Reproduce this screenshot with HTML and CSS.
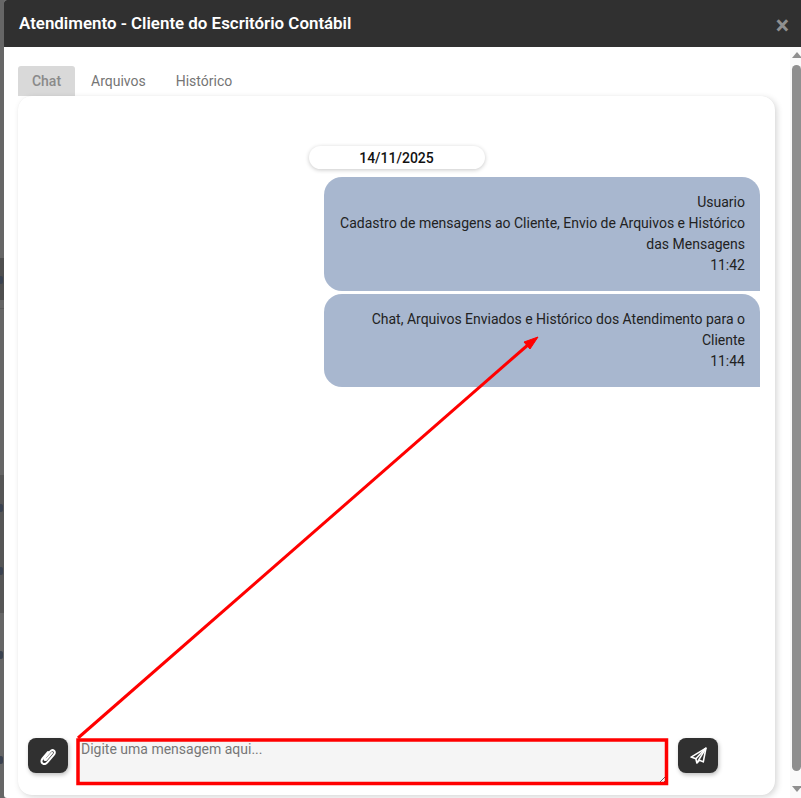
FILE: index.html
```html
<!DOCTYPE html>
<html lang="pt-BR">
<head>
<meta charset="utf-8">
<title>Atendimento</title>
<link rel="stylesheet" href="styles.css">
</head>
<body>
<div class="backdrop">
  <div class="band band-a"></div>
  <div class="band band-b"><i class="mark"></i></div>
  <div class="band band-c"></div>
  <div class="band band-d"></div>
  <div class="band band-e"><i class="mark"></i></div>
  <div class="band band-f"></div>
  <div class="band band-e"><i class="mark"></i></div>
  <div class="band band-g"></div>
  <div class="band band-g band-light"></div>
  <div class="band band-h"><i class="mark"></i></div>
  <div class="band band-i"></div>
  <div class="band band-h"><i class="mark"></i></div>
  <div class="band band-j"></div>
</div>
<main class="modal">
  <header class="modal-header">
    <h1 class="modal-title">Atendimento - Cliente do Escritório Contábil</h1>
    <span class="modal-close">×</span>
  </header>
  <div class="modal-body">
    <div class="content">
      <nav class="tabs">
        <span class="tab tab-active">Chat</span>
        <span class="tab">Arquivos</span>
        <span class="tab">Histórico</span>
      </nav>
      <section class="card">
        <div class="messages">
          <div class="date-row"><span class="date-pill">14/11/2025</span></div>
          <div class="bubble">Usuario<br>Cadastro de mensagens ao Cliente, Envio de Arquivos e Histórico das Mensagens<br>11:42</div>
          <div class="bubble">Chat, Arquivos Enviados e Histórico dos Atendimento para o Cliente<br>11:44</div>
        </div>
        <div class="composer">
          <button class="icon-btn" type="button" aria-label="Anexar">
            <svg width="18" height="18" viewBox="0 0 16 16" fill="none" stroke="#fff" stroke-width="1.8" stroke-linecap="round" stroke-linejoin="round"><path d="M5.2 9.6 10 3.9c1-1.1 2.5-1.300 3.400-.5.9.8.9 2.200-.1 3.300l-5.900 6.900c-1.300 1.500-3.200 1.900-4.400.9-1.200-1-1-2.900.2-4.300l4.900-5.800"/><path d="M5.200 9.600c-.6.8-.6 1.400-.2 1.800.5.4 1.100.2 1.700-.5L11.600 5.200"/></svg>
          </button>
          <textarea class="message-input" placeholder="Digite uma mensagem aqui..."></textarea>
          <button class="icon-btn" type="button" aria-label="Enviar">
            <svg width="17" height="17" viewBox="0 0 16 16" fill="none" stroke="#fff" stroke-width="1.5" stroke-linejoin="round"><path d="M15 1 1 9.500l4.500 1.500 1 4 2.500-2.500 3.500 1.500Z"/><path d="M15 1 5.500 11"/><path d="M15 1 6.500 15"/></svg>
          </button>
        </div>
      </section>
    </div>
    <div class="scrollbar">
      <span class="scroll-up"></span>
      <span class="scroll-thumb"></span>
      <span class="scroll-down"></span>
    </div>
  </div>
</main>
<svg class="annotation" width="801" height="798" viewBox="0 0 801 798" fill="none">
  <rect x="78" y="740" width="588.500" height="43.500" stroke="#f00" stroke-width="3.500"/>
  <path d="M78 738 529 344" stroke="#f00" stroke-width="3"/>
  <path d="M538 337 524 342 530 349Z" fill="#f00" stroke="#f00" stroke-width="1"/>
</svg>
</body>
</html>
```
FILE: styles.css
```css
* { box-sizing: border-box; }
html, body { margin: 0; height: 798px; overflow: hidden; }
body { display: flex; font-family: Roboto, "Liberation Sans", sans-serif; background: #666; }

.backdrop { width: 4px; display: flex; flex-direction: column; flex: none; overflow: hidden; }
.band { flex: none; background: #666; display: flex; align-items: center; }
.mark { display: block; width: 3px; height: 8px; background: #3a4250; border-radius: 0 2px 2px 0; }
.band-a { height: 258px; }
.band-b { height: 42px; background: #4f4f4f; padding-top: 2px; }
.band-c { height: 175px; border-top: 8px solid #666; box-shadow: inset 0 1px 0 #5a5a5a; }
.band-d { height: 26px; background: #565656; }
.band-e { height: 14px; background: #565656; }
.band-f { height: 49px; background: #565656; }
.band-g { height: 35px; background: #565656; }
.band-light { background: #666; }
.band-h { height: 14px; }
.band-i { height: 91px; }
.band-j { flex: 1; }

.modal { flex: 1; min-width: 0; display: flex; flex-direction: column; background: #fff; border-radius: 3px 0 0 3px; overflow: hidden; }
.modal-header { height: 47px; flex: none; background: #303030; color: #fff; display: flex; align-items: center; justify-content: space-between; padding: 0 12px 0 15px; }
.modal-title { margin: 0 0 1px; font-size: 16.900px; font-weight: 600; line-height: 20px; }
.modal-close { color: #8f8f8f; font-size: 25px; font-weight: 700; line-height: 20px; margin-top: 4px; }

.modal-body { flex: 1; min-height: 0; display: flex; }
.content { flex: 1; min-width: 0; padding: 19px 15px 3px 14px; display: flex; flex-direction: column; }

.tabs { display: flex; height: 30px; flex: none; }
.tab { padding: 0 15px; font-size: 14px; line-height: 30px; color: #757575; }
.tab-active { width: 57px; padding: 0; text-align: center; margin-right: 1px; background: #d9d9d9; color: #8a8a8a; font-weight: 500; border-radius: 3px 3px 0 0; }

.card { flex: 1; min-height: 0; display: flex; flex-direction: column; justify-content: space-between; background: #fff; border-radius: 14px; box-shadow: 0 0 1px rgba(0,0,0,.06), 2px 2px 6px rgba(0,0,0,.16); padding: 50px 15px 10px 10px; }

.messages { display: flex; flex-direction: column; align-items: flex-end; gap: 3px; }
.date-row { width: 100%; display: flex; justify-content: center; padding-left: 5px; margin-bottom: 5px; }
.date-pill { width: 176px; height: 23px; text-align: center; font-size: 14px; font-weight: 500; line-height: 24px; color: #111; background: #fff; border-radius: 12px; box-shadow: 0 1px 4px rgba(0,0,0,.22); }
.bubble { width: 436px; padding: 15px 15px 15px 16px; text-align: right; font-size: 14px; line-height: 21px; color: #222; background: #a8b7cf; border-radius: 18px 18px 0 18px; }

.composer { display: flex; align-items: flex-start; gap: 10px; padding-right: 42px; }
.icon-btn { width: 40px; height: 35px; flex: none; padding: 0; border: 0; border-radius: 8px; background: #303030; display: flex; align-items: center; justify-content: center; box-shadow: 1px 2px 4px rgba(0,0,0,.25); }
.message-input { flex: 1; min-width: 0; height: 46px; margin: 1px 0 0 -1px; padding: 0 3px; border: 1px dashed #888; background: #f5f5f5; font-family: inherit; font-size: 14px; line-height: 18px; color: #333; outline: 0; border-radius: 0; }
.message-input::placeholder { color: #777; opacity: 1; }

.scrollbar { width: 12px; flex: none; margin-right: -1px; background: #fafafa; display: flex; flex-direction: column; align-items: center; padding: 5px 0 0 1px; }
.scroll-up { width: 0; height: 0; border: 5px solid transparent; border-top: 0; border-bottom: 6px solid #8f8f8f; flex: none; }
.scroll-thumb { width: 9px; height: 706px; margin-top: 7px; background: #8f8f8f; border-radius: 5px; flex: none; }
.scroll-down { width: 0; height: 0; margin-top: 15px; border: 5px solid transparent; border-bottom: 0; border-top: 6px solid #8f8f8f; flex: none; }

.annotation { position: absolute; left: 0; top: 0; pointer-events: none; }
```
